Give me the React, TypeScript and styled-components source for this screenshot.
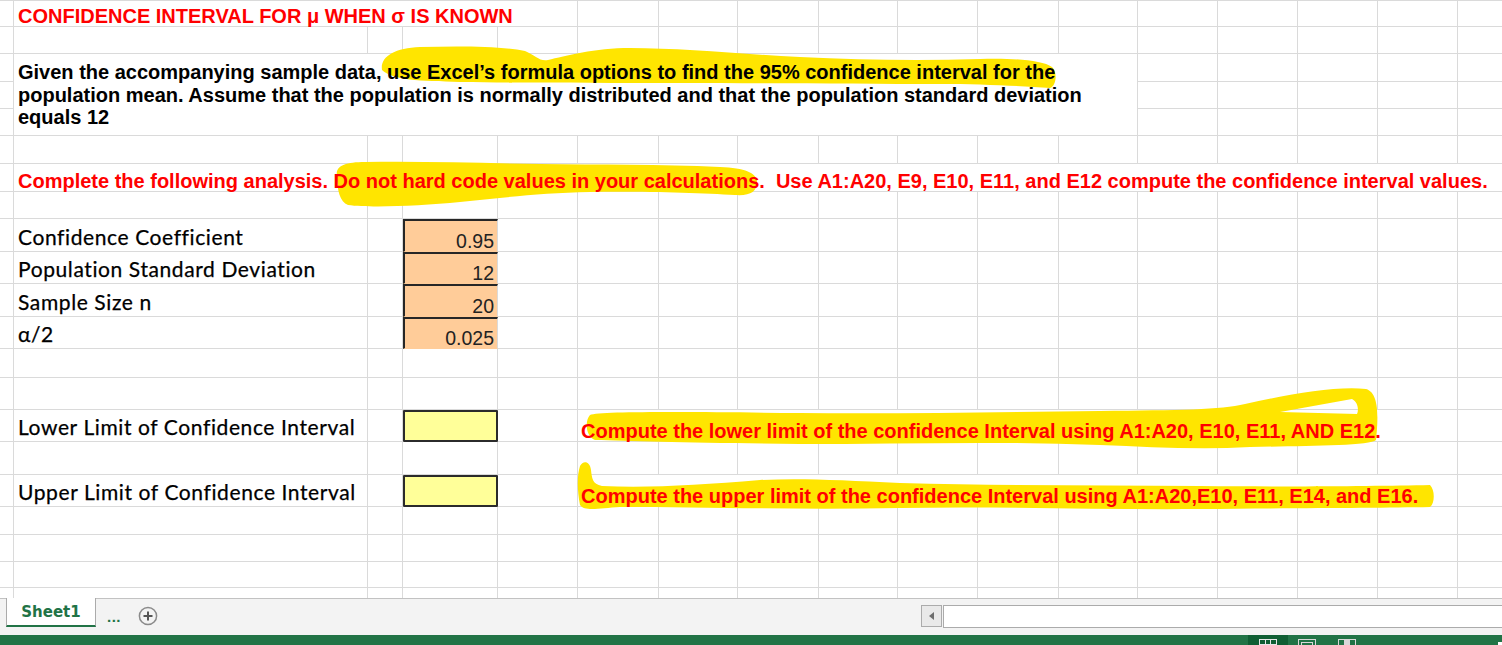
import React from 'react';
import styled, { createGlobalStyle } from 'styled-components';

const GlobalStyle = createGlobalStyle`
  html, body {
    margin: 0;
    padding: 0;
    background: #fff;
  }
  body {
    width: 1502px;
    height: 645px;
    overflow: hidden;
    font-family: "Liberation Sans", Arial, sans-serif;
  }
`;

// column widths / row heights of the visible part of the sheet
const COLS = [14, 354, 35, 95, 80, 81, 79, 81, 79, 80, 81, 79, 80, 80, 80, 80, 80];
const ROWS = [26, 27, 28, 27, 27, 28, 28, 27, 33, 32, 33, 32, 29, 32, 32, 33, 32, 28, 27, 26, 20];

const GRID = '#dadada';
const RED = '#ff0000';
const GREEN = '#217346';
const MARKER = '#ffe500';

type Kind = 'title' | 'para' | 'note' | 'label' | 'value' | 'input' | 'compute';

interface CellDef {
  row: number;
  col: number;
  span?: number;
  rows?: number;
  kind: Kind;
  text?: string;
  lines?: string[];
}

const cells: CellDef[] = [
  { row: 1, col: 1, span: 4, kind: 'title', text: 'CONFIDENCE INTERVAL FOR μ WHEN σ IS KNOWN' },
  {
    row: 3,
    col: 1,
    span: 11,
    rows: 3,
    kind: 'para',
    lines: [
      'Given the accompanying sample data, use Excel’s formula options to find the 95% confidence interval for the',
      'population mean. Assume that the population is normally distributed and that the population standard deviation',
      'equals 12',
    ],
  },
  {
    row: 7,
    col: 1,
    span: 16,
    kind: 'note',
    text: 'Complete the following analysis. Do not hard code values in your calculations.  Use A1:A20, E9, E10, E11, and E12 compute the confidence interval values.',
  },
  { row: 9, col: 1, kind: 'label', text: 'Confidence Coefficient' },
  { row: 9, col: 3, kind: 'value', text: '0.95' },
  { row: 10, col: 1, kind: 'label', text: 'Population Standard Deviation' },
  { row: 10, col: 3, kind: 'value', text: '12' },
  { row: 11, col: 1, kind: 'label', text: 'Sample Size n' },
  { row: 11, col: 3, kind: 'value', text: '20' },
  { row: 12, col: 1, kind: 'label', text: 'α/2' },
  { row: 12, col: 3, kind: 'value', text: '0.025' },
  { row: 15, col: 1, kind: 'label', text: 'Lower Limit of Confidence Interval' },
  { row: 15, col: 3, kind: 'input' },
  {
    row: 15,
    col: 5,
    span: 11,
    kind: 'compute',
    text: 'Compute the lower limit of the confidence Interval using A1:A20, E10, E11, AND E12.',
  },
  { row: 17, col: 1, kind: 'label', text: 'Upper Limit of Confidence Interval' },
  { row: 17, col: 3, kind: 'input' },
  {
    row: 17,
    col: 5,
    span: 11,
    kind: 'compute',
    text: 'Compute the upper limit of the confidence Interval using A1:A20,E10, E11, E14, and E16.',
  },
];

const Page = styled.div`
  width: 1502px;
  height: 645px;
  display: flex;
  flex-direction: column;
  overflow: hidden;
`;

const Sheet = styled.div`
  position: relative;
  height: 598px;
  flex: 0 0 598px;
  overflow: hidden;
  border-top: 1px solid ${GRID};
  box-sizing: border-box;
  display: grid;
  grid-template-columns: ${COLS.map(c => `${c}px`).join(' ')};
  grid-template-rows: ${ROWS.map(r => `${r}px`).join(' ')};
`;

const Cell = styled.div<{ $row: number; $col: number; $span: number; $rows: number }>`
  grid-row: ${p => p.$row} / span ${p => p.$rows};
  grid-column: ${p => p.$col + 1} / span ${p => p.$span};
  box-sizing: border-box;
  border-right: 1px solid ${GRID};
  border-bottom: 1px solid ${GRID};
  display: flex;
  align-items: flex-end;
  white-space: nowrap;
  min-width: 0;
  background: #fff;
`;

const Txt = styled.span`
  position: relative;
  z-index: 2;
`;

const TitleCell = styled(Cell)`
  padding-left: 4px;
  color: ${RED};
  font-weight: 700;
  font-size: 20px;
  line-height: 20px;
`;

const ParaCell = styled(Cell)`
  flex-direction: column;
  align-items: flex-start;
  justify-content: flex-start;
  padding: 7px 0 0 4px;
  color: #000;
  font-weight: 700;
  font-size: 20px;
  line-height: 22.5px;
`;

const NoteCell = styled(Cell)`
  padding-left: 4px;
  color: ${RED};
  font-weight: 700;
  font-size: 20px;
  line-height: 20px;
  white-space: pre;
`;

const LabelCell = styled(Cell)`
  padding: 0 0 4px 4px;
  color: #000;
  font-family: Lato, "Noto Sans", sans-serif;
  font-size: 21px;
  line-height: 21px;
  letter-spacing: 0.6px;
  -webkit-text-stroke: 0.25px #000;
`;

const ValueCell = styled(Cell)`
  justify-content: flex-end;
  padding-right: 3px;
  background: #ffcc99;
  border-left: 2px solid #262626;
  border-top: 2px solid #262626;
  border-bottom-color: transparent;
  color: #222;
  font-size: 19.5px;
  line-height: 19.5px;
`;

const InputCell = styled(Cell)`
  background: #ffff99;
  border: 2px solid #2b2b2b;
  border-radius: 1px;
`;

const ComputeCell = styled(Cell)`
  padding-left: 3px;
  color: ${RED};
  font-weight: 700;
  font-size: 20px;
  line-height: 20px;
`;

const Marker = styled.svg`
  position: absolute;
  left: 0;
  top: -1px;
  width: 1502px;
  height: 598px;
  z-index: 1;
  pointer-events: none;
`;

const TabBar = styled.div`
  flex: 0 0 37px;
  box-sizing: border-box;
  border-top: 1px solid #c2c2c2;
  background: #f3f3f3;
  display: flex;
  align-items: flex-start;
  padding-left: 6px;
`;

const SheetTab = styled.div`
  width: 90px;
  height: 29px;
  margin-top: -1px;
  box-sizing: border-box;
  background: #fff;
  border-left: 1px solid #ababab;
  border-right: 1px solid #ababab;
  border-bottom: 2px solid ${GREEN};
  display: flex;
  align-items: center;
  justify-content: center;
  color: ${GREEN};
  font-family: "DejaVu Sans", sans-serif;
  font-weight: 700;
  font-size: 15px;
`;

const More = styled.div`
  margin: 9px 0 0 11px;
  color: ${GREEN};
  font-weight: 700;
  font-size: 15px;
  letter-spacing: 0.5px;
`;

const AddSheet = styled.div`
  margin: 7px 0 0 17px;
  width: 20px;
  height: 20px;
  display: flex;
`;

const Spacer = styled.div`
  flex: 1;
`;

const ScrollArea = styled.div`
  width: 581px;
  margin-top: 6px;
  display: flex;
`;

const ScrollButton = styled.div`
  width: 21px;
  height: 22px;
  box-sizing: border-box;
  border: 1px solid #ababab;
  background: #e9e9e9;
  display: flex;
  align-items: center;
  justify-content: center;
`;

const ScrollTrack = styled.div`
  flex: 1;
  height: 23px;
  margin-left: 1px;
  box-sizing: border-box;
  border: 1px solid #ababab;
  border-right: none;
  background: #fff;
`;

const StatusBar = styled.div`
  flex: 0 0 30px;
  background: ${GREEN};
  display: flex;
  align-items: flex-start;
  padding-left: 1248px;
`;

const ViewButton = styled.div<{ $active?: boolean }>`
  width: 48px;
  height: 30px;
  background: ${p => (p.$active ? '#0f5e33' : 'transparent')};
  display: flex;
  justify-content: center;
  padding-top: 4px;
  box-sizing: border-box;
`;

const ZoomThumb = styled.div`
  width: 5px;
  height: 12px;
  margin: 7px 0 0 131px;
  background: #fff;
`;

function renderCell(def: CellDef, key: string) {
  const props = { $row: def.row, $col: def.col, $span: def.span ?? 1, $rows: def.rows ?? 1 };
  switch (def.kind) {
    case 'title':
      return <TitleCell key={key} {...props}><Txt>{def.text}</Txt></TitleCell>;
    case 'para':
      return (
        <ParaCell key={key} {...props}>
          {def.lines?.map(l => <Txt key={l}>{l}</Txt>)}
        </ParaCell>
      );
    case 'note':
      return <NoteCell key={key} {...props}><Txt>{def.text}</Txt></NoteCell>;
    case 'label':
      return <LabelCell key={key} {...props}><Txt>{def.text}</Txt></LabelCell>;
    case 'value':
      return <ValueCell key={key} {...props}><Txt>{def.text}</Txt></ValueCell>;
    case 'input':
      return <InputCell key={key} {...props} />;
    case 'compute':
      return <ComputeCell key={key} {...props}><Txt>{def.text}</Txt></ComputeCell>;
  }
}

function buildGrid() {
  const taken = new Set<string>();
  const out: React.ReactNode[] = [];
  cells.forEach((d, i) => {
    for (let r = d.row; r < d.row + (d.rows ?? 1); r++)
      for (let c = d.col; c < d.col + (d.span ?? 1); c++) taken.add(`${r}-${c}`);
    out.push(renderCell(d, `d${i}`));
  });
  ROWS.forEach((_, ri) => {
    const r = ri + 1;
    COLS.forEach((__, c) => {
      if (!taken.has(`${r}-${c}`)) out.push(<Cell key={`${r}-${c}`} $row={r} $col={c} $span={1} $rows={1} />);
    });
  });
  return out;
}

const Highlights = () => (
  <Marker viewBox="0 0 1502 598">
    <g fill={MARKER}>
      <path d="M382,70 C380,57 394,48 420,47 C460,46 500,46 525,51 C535,55 540,62 548,60 C565,56 595,48 630,48 C680,48 740,54 800,57 C860,60 920,61 980,59 C1012,58 1042,60 1052,67 C1058,73 1056,86 1050,88 C1020,86 980,84 940,84 C860,84 760,83 680,83 C600,83 520,83 460,82 C420,81 392,80 382,70 Z" />
      <path d="M337,176 C335,166 345,162 365,162 C420,161 480,163 540,164 C600,165 660,164 720,167 C745,168 757,173 757,182 C757,192 750,196 735,195 C700,193 640,191 590,192 C540,193 500,198 460,202 C420,206 370,208 348,205 C340,202 337,190 337,176 Z" />
      <path
        fillRule="evenodd"
        d="M590,415 C600,411 700,412 800,413 C900,414 1000,412 1100,411 C1180,410 1220,410 1245,404 C1290,394 1335,386 1366,389 C1380,393 1378,420 1376,440 C1370,446 1300,446 1250,447 C1200,450 1150,447 1100,445 C1000,441 900,444 800,444 C700,443 630,441 595,440 C585,436 585,420 590,415 Z M1280,412 L1352,399 C1358,402 1359,410 1357,414 Z"
      />
      <path d="M580,466 C583,460 590,461 591,470 C592,478 592,484 602,486 C650,488 700,485 760,480 C800,478 840,480 900,483 C1000,486 1100,485 1200,486 C1300,487 1380,486 1430,485 C1435,490 1435,503 1430,507 C1380,508 1300,508 1200,509 C1100,510 1000,506 900,508 C800,510 700,507 620,507 C600,508 585,512 580,505 C577,490 577,475 580,466 Z" />
    </g>
  </Marker>
);

export default function App() {
  return (
    <Page>
      <GlobalStyle />
      <Sheet>
        {buildGrid()}
        <Highlights />
      </Sheet>
      <TabBar>
        <SheetTab>Sheet1</SheetTab>
        <More>...</More>
        <AddSheet>
          <svg width="20" height="20" viewBox="0 0 20 20">
            <circle cx="10" cy="10" r="8.6" fill="none" stroke="#8a8a8a" strokeWidth="1.5" />
            <path d="M10 5.5v9M5.5 10h9" stroke="#555" strokeWidth="2" />
          </svg>
        </AddSheet>
        <Spacer />
        <ScrollArea>
          <ScrollButton>
            <svg width="6" height="8" viewBox="0 0 6 8">
              <path d="M5 0v8L0 4z" fill="#6d6d6d" />
            </svg>
          </ScrollButton>
          <ScrollTrack />
        </ScrollArea>
      </TabBar>
      <StatusBar>
        <ViewButton $active>
          <svg width="18" height="14" viewBox="0 0 18 14">
            <rect x="0.5" y="0.5" width="17" height="13" fill="none" stroke="#e6e6e6" />
            <path d="M6.5 0v14M11.5 0v14M0 5.5h18" stroke="#e6e6e6" />
          </svg>
        </ViewButton>
        <ViewButton>
          <svg width="18" height="14" viewBox="0 0 18 14">
            <rect x="0.5" y="0.5" width="17" height="13" fill="none" stroke="#d8d8d8" />
            <rect x="3.5" y="3.5" width="11" height="10" fill="none" stroke="#d8d8d8" />
          </svg>
        </ViewButton>
        <ViewButton>
          <svg width="18" height="14" viewBox="0 0 18 14">
            <rect x="0.5" y="0.5" width="17" height="13" fill="none" stroke="#d8d8d8" />
            <rect x="6" y="1" width="6" height="13" fill="#d8d8d8" />
          </svg>
        </ViewButton>
        <ZoomThumb />
      </StatusBar>
    </Page>
  );
}
